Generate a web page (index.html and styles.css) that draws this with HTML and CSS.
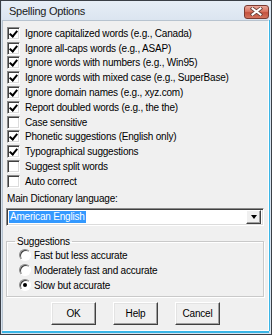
FILE: index.html
```html
<!DOCTYPE html>
<html>
<head>
<meta charset="utf-8">
<link rel="stylesheet" href="styles.css">
</head>
<body>
<div class="window">
  <div class="titlebar">
    <span class="title">Spelling Options</span>
    <span class="close">
      <svg width="13" height="9" viewBox="0 0 13 9">
        <path d="M2.5 1.5 L10.5 7.5 M10.5 1.5 L2.5 7.5" stroke="#6a4038" stroke-width="3.6" stroke-linecap="square"/>
        <path d="M2.5 1.5 L10.5 7.5 M10.5 1.5 L2.5 7.5" stroke="#ffffff" stroke-width="2" stroke-linecap="square"/>
      </svg>
    </span>
  </div>
  <div class="client">
    <ul class="checks">
      <li class="row"><span class="box on"></span>Ignore capitalized words (e.g., Canada)</li>
      <li class="row"><span class="box on"></span>Ignore all-caps words (e.g., ASAP)</li>
      <li class="row"><span class="box on"></span>Ignore words with numbers (e.g., Win95)</li>
      <li class="row"><span class="box on"></span>Ignore words with mixed case (e.g., SuperBase)</li>
      <li class="row"><span class="box on"></span>Ignore domain names (e.g., xyz.com)</li>
      <li class="row"><span class="box on"></span>Report doubled words (e.g., the the)</li>
      <li class="row"><span class="box"></span>Case sensitive</li>
      <li class="row"><span class="box on"></span>Phonetic suggestions (English only)</li>
      <li class="row"><span class="box on"></span>Typographical suggestions</li>
      <li class="row"><span class="box"></span>Suggest split words</li>
      <li class="row"><span class="box"></span>Auto correct</li>
    </ul>
    <div class="lang-label">Main Dictionary language:</div>
    <div class="combo">
      <span class="sel">American English</span>
      <span class="drop"><span class="tri"></span></span>
    </div>
    <fieldset class="group">
      <legend>Suggestions</legend>
      <div class="radio-row"><span class="radio"></span>Fast but less accurate</div>
      <div class="radio-row"><span class="radio"></span>Moderately fast and accurate</div>
      <div class="radio-row"><span class="radio on"></span>Slow but accurate</div>
    </fieldset>
    <div class="buttons">
      <span class="btn">OK</span>
      <span class="btn">Help</span>
      <span class="btn">Cancel</span>
    </div>
  </div>
</div>
</body>
</html>
```

FILE: styles.css
```css
* { box-sizing: border-box; }
html, body { margin: 0; padding: 0; background: #ffffff; }
body {
  font-family: "Liberation Sans", Arial, sans-serif;
  font-size: 10px;
  letter-spacing: -0.2px;
  color: #000;
}
.window {
  width: 272px;
  height: 335px;
  border: 1px solid #3a3f46;
  background: #d6e2ee;
  display: flex;
  flex-direction: column;
  padding: 0 2px 3px 1px;
}
.titlebar {
  height: 19px;
  flex: none;
  display: flex;
  align-items: center;
  justify-content: space-between;
  padding: 0 1px 0 7px;
  margin-right: -1px;
  background: linear-gradient(#e7eef6, #dbe5f0);
}
.title {
  font-size: 11px;
  letter-spacing: -0.25px;
  color: #1a1a1a;
  padding-top: 1px;
}
.close {
  width: 25px;
  height: 14px;
  margin-top: 2px;
  border: 1px solid #7b3b31;
  border-radius: 3px;
  background: linear-gradient(#eaa89b 0%, #d97562 45%, #c5533f 55%, #d2725d 100%);
  display: flex;
  align-items: center;
  justify-content: center;
}
.close svg { display: block; }
.client {
  flex: 1;
  background: #f0f0f0;
  border: 1px solid #b7c3cf;
  border-right-color: #ffffff;
  border-bottom-color: #ffffff;
  box-shadow: 1px 0 0 #3bb6e6, 0 2px 0 #3bb6e6;
  padding: 5px 4px 0 3px;
  display: flex;
  flex-direction: column;
}
.checks {
  list-style: none;
  margin: 0;
  padding: 0 0 0 1px;
}
.row {
  height: 14.8px;
  display: flex;
  align-items: center;
  gap: 5px;
  white-space: nowrap;
}
.box {
  width: 13px;
  height: 13px;
  flex: none;
  background: #fff;
  border: 1px solid;
  border-color: #8a8a8a #ffffff #ffffff #8a8a8a;
  box-shadow: inset 1px 1px 0 #404040, inset -1px -1px 0 #dcdcdc;
  position: relative;
}
.box.on::after {
  content: "";
  position: absolute;
  left: 3px;
  top: 1px;
  width: 3px;
  height: 6px;
  border: solid #000;
  border-width: 0 2px 2px 0;
  transform: rotate(40deg);
}
.lang-label {
  margin-top: 3px;
  padding-left: 1px;
  line-height: 13px;
}
.combo {
  margin-top: 3px;
  height: 18px;
  background: #fff;
  border: 1px solid;
  border-color: #8a8a8a #ffffff #ffffff #8a8a8a;
  box-shadow: inset 1px 1px 0 #404040, inset -1px -1px 0 #dcdcdc;
  display: flex;
  align-items: center;
  justify-content: space-between;
  padding: 0 2px 0 2px;
}
.sel {
  background: #3399ff;
  color: #fff;
  line-height: 12px;
  padding: 0 1px;
}
.drop {
  width: 15px;
  height: 14px;
  background: #f0f0f0;
  border: 1px solid;
  border-color: #ffffff #404040 #404040 #ffffff;
  box-shadow: inset -1px -1px 0 #a0a0a0;
  display: flex;
  align-items: center;
  justify-content: center;
}
.tri {
  width: 0;
  height: 0;
  border-left: 3.5px solid transparent;
  border-right: 3.5px solid transparent;
  border-top: 4px solid #000;
}
.group {
  margin: 10px 0 0 0;
  padding: 0 4px 3px 12px;
  border: 1px solid #c9c9c9;
  box-shadow: inset 1px 1px 0 #ffffff, 1px 1px 0 #ffffff;
  min-width: 0;
}
.group legend {
  padding: 0 2px;
  margin-left: -4px;
  line-height: 12px;
}
.radio-row {
  height: 15px;
  display: flex;
  align-items: center;
  gap: 3px;
  white-space: nowrap;
}
.radio {
  width: 12px;
  height: 12px;
  flex: none;
  border-radius: 50%;
  background: #fff;
  border: 1px solid;
  border-color: #8a8a8a #ffffff #ffffff #8a8a8a;
  box-shadow: inset 1px 1px 0 #404040;
  display: flex;
  align-items: center;
  justify-content: center;
}
.radio.on::after {
  content: "";
  width: 4px;
  height: 4px;
  border-radius: 50%;
  background: #000;
}
.buttons {
  margin-top: 5px;
  display: flex;
  justify-content: center;
  gap: 17px;
  padding-left: 1px;
}
.btn {
  width: 45px;
  height: 23px;
  display: flex;
  align-items: center;
  justify-content: center;
  background: #f0f0f0;
  border: 1px solid;
  border-color: #ffffff #404040 #404040 #ffffff;
  box-shadow: inset -1px -1px 0 #a0a0a0, inset 1px 1px 0 #e3e3e3;
}
```
